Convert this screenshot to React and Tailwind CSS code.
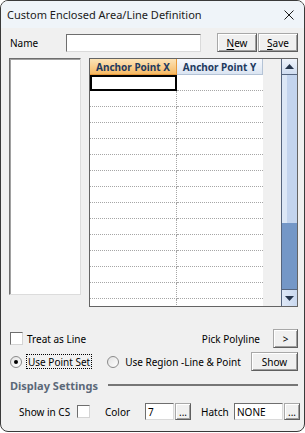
import React from "react";

// ── Small classic-Windows building blocks ─────────────────────────────────────
function Btn({ className = "", children }) {
  return (
    <div
      className={`flex items-center justify-center bg-[#f0f0f0] border border-t-[#a8a8a8] border-l-[#a8a8a8] border-r-[#5f5f5f] border-b-[#5f5f5f] shadow-[inset_1px_1px_0_#ffffff,inset_-1px_-1px_0_#a0a0a0] text-black ${className}`}
    >
      {children}
    </div>
  );
}

function Field({ className = "", children }) {
  return (
    <div
      className={`flex items-center bg-white border border-t-[#6e6e6e] border-l-[#6e6e6e] border-r-[#dadada] border-b-[#dadada] pl-[2px] ${className}`}
    >
      {children}
    </div>
  );
}

function Check() {
  return (
    <div className="w-[13px] h-[13px] shrink-0 bg-white border border-t-[#6e6e6e] border-l-[#6e6e6e] border-r-[#d4d4d4] border-b-[#d4d4d4]" />
  );
}

function Radio({ on }) {
  return (
    <div className="w-[12px] h-[12px] shrink-0 rounded-full border border-[#8a8a8a] bg-gradient-to-br from-[#e2e2e2] to-white flex items-center justify-center">
      {on && <div className="w-[4px] h-[4px] rounded-full bg-black" />}
    </div>
  );
}

function Arrow({ down }) {
  return (
    <svg width="9" height="5" viewBox="0 0 9 5">
      <polygon points={down ? "0,0 9,0 4.5,5" : "0,5 9,5 4.5,0"} fill="#26354d" />
    </svg>
  );
}

const ROWS = Array.from({ length: 15 }, (_, i) => i);

export default function App() {
  return (
    <div className="w-[305px] h-[433px] bg-white font-['Noto_Sans',sans-serif] text-[10px] text-black leading-none">
      <div className="w-[305px] h-[432px] flex flex-col border border-[#3a3a3a] rounded-[8px] overflow-hidden bg-[#f0f0f0]">

        {/* ── Title bar ── */}
        <div className="h-[27px] shrink-0 flex items-center justify-between bg-[#eff4f9] pl-[6px] pr-[10px]">
          <span className="text-[11px] text-[#1b1b1b]">Custom Enclosed Area/Line Definition</span>
          <svg width="10" height="10" viewBox="0 0 10 10">
            <path d="M0.5 0.5L9.5 9.5M9.5 0.5L0.5 9.5" stroke="#1b1b1b" strokeWidth="1" />
          </svg>
        </div>

        {/* ── Body ── */}
        <div className="flex-1 flex flex-col pl-[8px] pt-[5px]">

          {/* Name row */}
          <div className="flex items-center h-[19px]">
            <span className="w-[57px] pl-[1px]">Name</span>
            <Field className="w-[135px] h-[18px]" />
            <Btn className="ml-[16px] w-[40px] h-[19px]">
              <span className="underline underline-offset-2">N</span>ew
            </Btn>
            <Btn className="ml-[1px] w-[40px] h-[19px]">
              <span className="underline underline-offset-2">S</span>ave
            </Btn>
          </div>

          {/* List + grid */}
          <div className="flex mt-[6px]">
            <div className="w-[72px] h-[237px] bg-white border border-t-[#6e6e6e] border-l-[#6e6e6e] border-r-[#dcdcdc] border-b-[#dcdcdc] shadow-[inset_1px_1px_0_#a0a0a0]" />

            <div className="ml-[8px] w-[209px] h-[249px] flex border border-[#646464] bg-[#f0f0f0] overflow-hidden">
              <div className="w-[173px] flex flex-col bg-white">
                <div className="flex h-[16px] shrink-0 font-bold text-[10px] text-[#1e3a5f]">
                  <div className="w-[87px] flex items-center justify-center bg-gradient-to-b from-[#fce4b8] to-[#f6b962] border-r border-b border-[#e79a3c]">
                    Anchor Point X
                  </div>
                  <div className="w-[86px] flex items-center justify-center bg-gradient-to-b from-[#f7f9fd] to-[#dbe5f2] border-r border-b border-[#b4c3d6]">
                    Anchor Point Y
                  </div>
                </div>
                {ROWS.map((i) => (
                  <div key={i} className="flex h-[16px] shrink-0">
                    {i === 0 ? (
                      <div className="w-[87px] border-2 border-black" />
                    ) : (
                      <div className="w-[87px] border-r border-b border-dotted border-[#a6a6a6]" />
                    )}
                    <div className="w-[86px] border-b border-dotted border-[#a6a6a6]" />
                  </div>
                ))}
              </div>

              <div className="w-[18px]" />

              {/* Scrollbar */}
              <div className="w-[16px] flex flex-col border-l border-[#55657f]">
                <div className="h-[16px] shrink-0 flex items-center justify-center bg-gradient-to-b from-[#eef3fb] to-[#cfdcf0] border-b border-[#55657f]">
                  <Arrow />
                </div>
                <div className="flex-1 flex flex-col bg-[#c3d4ee]">
                  <div className="flex-1 flex">
                    <div className="w-[5px] bg-[#dce7f6]" />
                  </div>
                  <div className="h-[66px] bg-[#7497c7]" />
                </div>
                <div className="h-[17px] shrink-0 flex items-center justify-center bg-gradient-to-r from-[#dfe8f6] to-[#c9d8ef] border-t border-[#55657f]">
                  <Arrow down />
                </div>
              </div>
            </div>
          </div>

          {/* Treat as line / pick polyline */}
          <div className="flex items-center w-[289px] h-[19px] mt-[22px] pl-[1px]">
            <Check />
            <span className="ml-[4px]">Treat as Line</span>
            <span className="ml-auto">Pick Polyline</span>
            <Btn className="ml-[13px] w-[25px] h-[19px]">&gt;</Btn>
          </div>

          {/* Radios */}
          <div className="flex items-center w-[289px] h-[19px] mt-[4px] pl-[1px]">
            <Radio on />
            <span className="ml-[4px] px-[1px] h-[15px] flex items-center border border-dotted border-black">
              Use Point Set
            </span>
            <div className="ml-[15px]">
              <Radio />
            </div>
            <span className="ml-[6px]">Use Region -Line &amp; Point</span>
            <Btn className="ml-auto w-[47px] h-[19px]">Show</Btn>
          </div>

          {/* Display settings heading */}
          <div className="flex items-center w-[289px] h-[16px] mt-[6px] pl-[1px]">
            <span className="font-bold text-[11px] text-[#5b6878]">Display Settings</span>
            <div className="flex-1 ml-[10px] h-[2px] bg-[#767676]" />
          </div>

          {/* Bottom row */}
          <div className="flex items-center h-[17px] mt-[10px] pl-[10px]">
            <span className="w-[58px]">Show in CS</span>
            <Check />
            <span className="ml-[15px] w-[40px]">Color</span>
            <Field className="w-[29px] h-[17px]">7</Field>
            <Btn className="ml-[1px] w-[16px] h-[17px]">...</Btn>
            <span className="ml-[10px] w-[33px]">Hatch</span>
            <Field className="w-[49px] h-[17px]">NONE</Field>
            <Btn className="ml-[1px] w-[16px] h-[17px]">...</Btn>
          </div>
        </div>
      </div>
    </div>
  );
}
